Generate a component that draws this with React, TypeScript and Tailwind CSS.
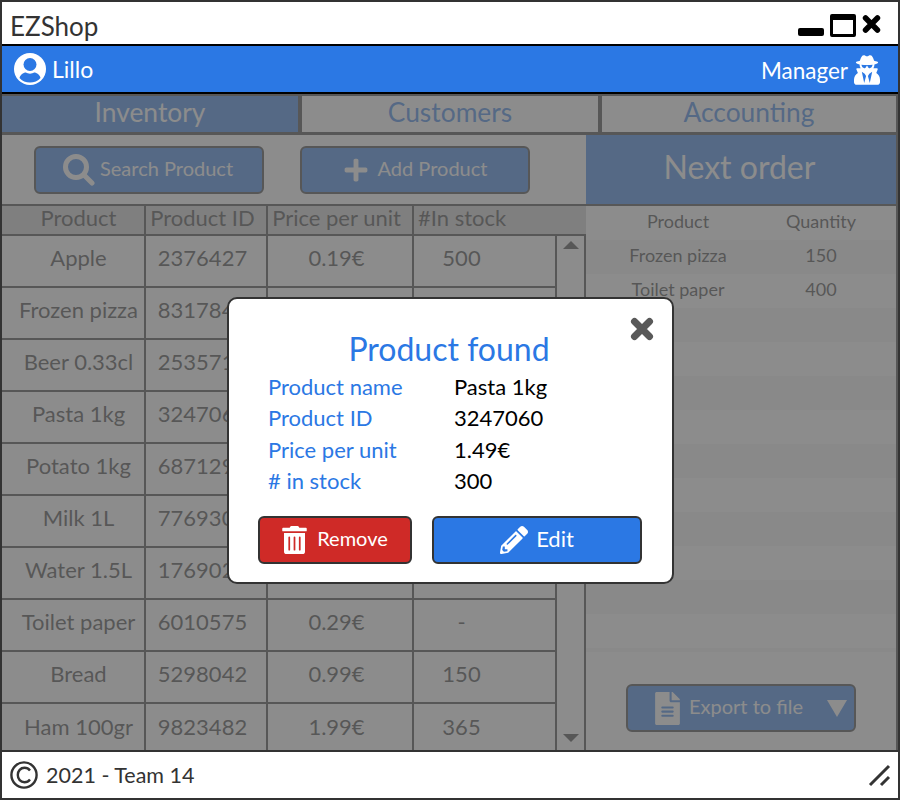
import { FaUserSecret, FaTrashAlt, FaPencilAlt, FaFileAlt, FaPlus } from "react-icons/fa";

const products = [
  ["Apple", "2376427", "0.19€", "500"],
  ["Frozen pizza", "8317840", "2.49€", "150"],
  ["Beer 0.33cl", "2535712", "0.79€", "300"],
  ["Pasta 1kg", "3247060", "1.49€", "300"],
  ["Potato 1kg", "6871290", "0.59€", "200"],
  ["Milk 1L", "7769301", "0.89€", "120"],
  ["Water 1.5L", "1769021", "0.39€", "600"],
  ["Toilet paper", "6010575", "0.29€", "-"],
  ["Bread", "5298042", "0.99€", "150"],
  ["Ham 100gr", "9823482", "1.99€", "365"],
];

const stockOrder = [
  ["Frozen pizza", "150"],
  ["Toilet paper", "400"],
];

const found = [
  ["Product name", "Pasta 1kg"],
  ["Product ID", "3247060"],
  ["Price per unit", "1.49€"],
  ["# in stock", "300"],
];

function CloseIcon({ className }: { className: string }) {
  return (
    <svg viewBox="0 0 24 24" className={className} fill="none" stroke="currentColor" strokeWidth="7" strokeLinecap="round">
      <path d="M4.5 4.5 L19.5 19.5 M19.5 4.5 L4.5 19.5" />
    </svg>
  );
}

function UserIcon() {
  return (
    <svg viewBox="0 0 32 32" className="h-[32px] w-[32px]">
      <circle cx="16" cy="16" r="16" fill="#ffffff" />
      <circle cx="16" cy="11.5" r="6.5" fill="#2b78e4" />
      <path d="M5.5 25 C6.5 21 10 19.5 12 19.5 C14 21 18 21 20 19.5 C22 19.5 25.5 21 26.5 25 C24 28 20 29.5 16 29.5 C12 29.5 8 28 5.5 25 Z" fill="#2b78e4" />
    </svg>
  );
}

function SearchIcon() {
  return (
    <svg viewBox="0 0 32 32" className="h-[32px] w-[32px]" fill="none" stroke="currentColor" strokeLinecap="round">
      <circle cx="13" cy="13" r="10.5" strokeWidth="5" />
      <path d="M21 21 L29 29" strokeWidth="5" />
    </svg>
  );
}

function CopyrightIcon() {
  return (
    <svg viewBox="0 0 28 28" className="h-[28px] w-[28px]" fill="none" stroke="#333333" strokeWidth="2.4">
      <circle cx="14" cy="14" r="12.6" />
      <path d="M20 9.5 C18.5 7.5 16.5 6.8 14.5 6.8 C10.5 6.8 7.8 10 7.8 14 C7.8 18 10.5 21.2 14.5 21.2 C16.5 21.2 18.5 20.5 20 18.5" />
    </svg>
  );
}

export default function App() {
  return (
    <div className="relative flex h-[800px] w-[900px] flex-col overflow-hidden border-2 border-[#333333] bg-white font-['Lato','Liberation_Sans',sans-serif] text-[#333333]">
      {/* Title bar */}
      <div className="flex h-[42px] shrink-0 items-center justify-between pl-[8px] pr-[17px]">
        <span className="pt-[5px] text-[26px] leading-none">EZShop</span>
        <div className="flex items-center gap-[6px] text-black">
          <div className="mt-[17px] h-[8px] w-[26px] rounded-[2px] bg-black" />
          <div className="mt-[4px] h-[23px] w-[26px] rounded-[2px] border-[3px] border-t-[6px] border-black" />
          <CloseIcon className="mt-[2px] h-[20px] w-[19px]" />
        </div>
      </div>

      {/* User bar */}
      <div className="flex h-[50px] shrink-0 items-center justify-between border-y-2 border-black bg-[#2b78e4] pl-[12px] pr-[18px] text-white">
        <div className="flex items-center gap-[6px]">
          <UserIcon />
          <span className="text-[23px] leading-none">Lillo</span>
        </div>
        <div className="flex items-center gap-[6px]">
          <span className="pt-[5px] text-[22.5px] leading-none">Manager</span>
          <FaUserSecret className="mt-[2px] h-[30px] w-[26px]" />
        </div>
      </div>

      {/* Tabs */}
      <div className="flex h-[41px] shrink-0 gap-[4px] bg-[#333333] pb-[3px] pr-[2px] pt-[2px] text-[26.4px] leading-none">
        <div className="flex w-[296px] items-center justify-center pb-[4px] bg-[#2b78e4] text-white">Inventory</div>
        <div className="flex w-[296px] items-center justify-center pb-[4px] bg-white text-[#2b78e4]">Customers</div>
        <div className="flex flex-1 items-center justify-center pb-[4px] bg-white text-[#2b78e4]">Accounting</div>
      </div>

      <div className="flex min-h-0 flex-1 border-r-2 border-[#333333]">
        {/* Inventory */}
        <div className="flex w-[584px] shrink-0 flex-col">
          <div className="flex h-[69px] shrink-0 items-center gap-[36px] pl-[32px] pt-[1px]">
            <div className="flex h-[48px] w-[230px] items-center pl-[27px] gap-[5px] rounded-[6px] border-2 border-[#333333] bg-[#2b78e4] text-[20px] text-white">
              <SearchIcon />
              <span className="pb-[4px]">Search Product</span>
            </div>
            <div className="flex h-[48px] w-[230px] items-center justify-center gap-[9px] rounded-[6px] border-2 border-[#333333] bg-[#2b78e4] text-[20px] text-white">
              <FaPlus className="h-[26px] w-[26px]" />
              <span className="pb-[4px]">Add Product</span>
            </div>
          </div>
          <div className="grid h-[32px] shrink-0 grid-cols-[144px_122px_146px_1fr] border-y-2 border-[#333333] bg-[#cccccc] text-[22px] leading-none">
            <div className="flex items-center justify-center border-r-2 border-[#333333] pb-[5px] pl-[11px]">Product</div>
            <div className="flex items-center justify-center border-r-2 border-[#333333] pb-[5px] pr-[7px]">Product ID</div>
            <div className="flex items-center justify-center border-r-2 border-[#333333] pb-[5px] pr-[7px]">Price per unit</div>
            <div className="flex items-center pb-[5px] pl-[4px]">#In stock</div>
          </div>
          <div className="flex min-h-0 flex-1">
            <div className="w-[553px] shrink-0">
              {products.map((row) => (
                <div key={row[1]} className="grid h-[52px] grid-cols-[144px_122px_146px_1fr] border-b-2 border-[#333333] text-[22px] leading-none last:border-b-0">
                  <div className="flex items-center justify-center border-r-2 border-[#333333] pb-[6px] pl-[11px]">{row[0]}</div>
                  <div className="flex items-center justify-center border-r-2 border-[#333333] pb-[6px] pr-[7px]">{row[1]}</div>
                  <div className="flex items-center justify-center border-r-2 border-[#333333] pb-[6px] pr-[7px]">{row[2]}</div>
                  <div className="flex items-center justify-center pb-[6px] pr-[46px]">{row[3]}</div>
                </div>
              ))}
            </div>
            <div className="flex w-[31px] shrink-0 flex-col items-center justify-between border-x-2 border-[#333333] pb-[8px] pt-[5px]">
              <div className="h-0 w-0 border-x-[8px] border-b-[8px] border-x-transparent border-b-[#333333]" />
              <div className="h-0 w-0 border-x-[8px] border-t-[8px] border-x-transparent border-t-[#333333]" />
            </div>
          </div>
        </div>

        {/* Next order */}
        <div className="flex min-w-0 flex-1 flex-col">
          <div className="flex h-[71px] shrink-0 items-center justify-center border-b-2 border-[#333333] bg-[#2b78e4] pb-[6px] pr-[3px] text-[32px] leading-none text-white">
            Next order
          </div>
          <div className="grid h-[34px] shrink-0 grid-cols-[184px_102px] items-center pb-[4px] text-center text-[18px] leading-none">
            <span>Product</span>
            <span>Quantity</span>
          </div>
          {Array.from({ length: 12 }).map((_, i) => (
            <div key={i} className={`grid h-[34px] shrink-0 grid-cols-[184px_102px] items-center pb-[4px] text-center text-[18px] leading-none ${i % 2 === 0 ? "bg-[#f2f2f2]" : ""}`}>
              <span>{stockOrder[i]?.[0]}</span>
              <span>{stockOrder[i]?.[1]}</span>
            </div>
          ))}
          <div className="h-[4px] shrink-0 bg-[#f2f2f2]" />
          <div className="flex flex-1 items-start justify-center pt-[32px]">
            <div className="flex h-[48px] w-[230px] items-center rounded-[6px] border-2 border-[#333333] bg-[#2b78e4] pl-[26px] text-[20px] text-white">
              <FaFileAlt className="h-[33px] w-[27px]" />
              <span className="ml-[8px] pb-[4px]">Export to file</span>
              <div className="ml-auto mr-[7px] h-0 w-0 border-x-[10px] border-t-[17px] border-x-transparent border-t-white" />
            </div>
          </div>
        </div>
      </div>

      {/* Footer */}
      <div className="flex h-[48px] shrink-0 items-center justify-between border-t-2 border-[#333333] bg-white pl-[8px] pr-[6px]">
        <div className="flex items-center gap-[8px]">
          <CopyrightIcon />
          <span className="pt-[1px] text-[21.5px] leading-none">2021 - Team 14</span>
        </div>
        <svg width="24" height="24" viewBox="0 0 24 24" stroke="#333333" strokeWidth="3">
          <path d="M2 22 L21 3 M13 22 L21 14" />
        </svg>
      </div>

      {/* Dimmed layer over the main area */}
      <div className="absolute inset-x-0 bottom-[48px] top-[92px] bg-[#646464]/74" />

      {/* Modal */}
      <div className="absolute left-[225px] top-[295px] flex h-[287px] w-[447px] flex-col rounded-[10px] border-2 border-[#333333] bg-white">
        <CloseIcon className="absolute right-[18px] top-[18px] h-[24px] w-[24px] text-[#595959]" />
        <h2 className="mt-[29px] pr-[3px] text-center text-[32px] font-normal leading-[42px] text-[#2b78e4]">Product found</h2>
        <div className="mt-[1px] flex flex-col pl-[39px] text-[22px] leading-[31.3px]">
          {found.map(([label, value]) => (
            <div key={label} className="flex">
              <span className="w-[186px] text-[#2b78e4]">{label}</span>
              <span className="text-black">{value}</span>
            </div>
          ))}
        </div>
        <div className="mt-[20px] flex gap-[20px] pl-[29px]">
          <div className="flex h-[48px] w-[154px] items-center justify-center gap-[10px] rounded-[6px] border-2 border-[#333333] bg-[#cf2a27] text-[20px] text-white">
            <FaTrashAlt className="h-[28px] w-[25px]" />
            <span className="pb-[4px]">Remove</span>
          </div>
          <div className="flex h-[48px] w-[210px] items-center justify-center gap-[8px] rounded-[6px] border-2 border-[#333333] bg-[#2b78e4] text-[22px] text-white">
            <FaPencilAlt className="h-[28px] w-[28px]" />
            <span className="pb-[4px]">Edit</span>
          </div>
        </div>
      </div>
    </div>
  );
}
